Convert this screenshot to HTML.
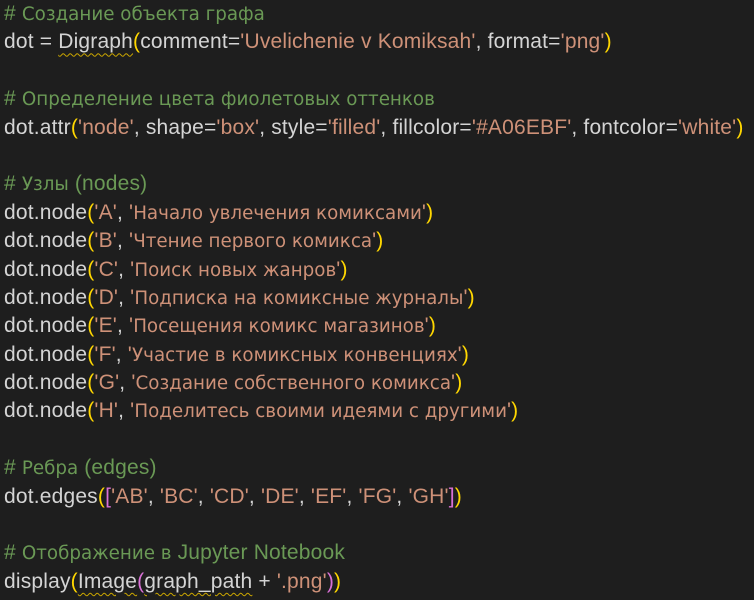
<!DOCTYPE html>
<html><head><meta charset="utf-8"><style>
body{margin:0;background:#1e1e1e;width:754px;height:600px;overflow:hidden}
.code{position:absolute;top:0;left:4px;font-family:"Liberation Sans",sans-serif;font-size:21px;letter-spacing:0.18px;color:#d4d4d4}
.code div{height:28.4px;line-height:28.4px;white-space:pre;overflow:visible}
.c{color:#6a9955}.s{color:#ce9178}.y{color:#ffd700}.p{color:#da70d6}
.r{font-family:"DejaVu Sans",sans-serif;font-size:18.3px;line-height:0;letter-spacing:0}
.w{text-decoration:underline wavy #cca700;text-decoration-thickness:1px;text-underline-offset:4px}
</style></head><body><div class="code">
<div><span class="c"># <span class="r">Создание объекта графа</span></span></div>
<div>dot = <span class="w">Digraph</span><span class="y">(</span>comment=<span class="s">'Uvelichenie v Komiksah'</span>, format=<span class="s">'png'</span><span class="y">)</span></div>
<div> </div>
<div><span class="c"># <span class="r">Определение цвета фиолетовых оттенков</span></span></div>
<div>dot.attr<span class="y">(</span><span class="s">'node'</span>, shape=<span class="s">'box'</span>, style=<span class="s">'filled'</span>, fillcolor=<span class="s">'#A06EBF'</span>, fontcolor=<span class="s">'white'</span><span class="y">)</span></div>
<div> </div>
<div><span class="c"># <span class="r">Узлы</span> (nodes)</span></div>
<div>dot.node<span class="y">(</span><span class="s">'A'</span>, <span class="s">'<span class="r">Начало увлечения комиксами</span>'</span><span class="y">)</span></div>
<div>dot.node<span class="y">(</span><span class="s">'B'</span>, <span class="s">'<span class="r">Чтение первого комикса</span>'</span><span class="y">)</span></div>
<div>dot.node<span class="y">(</span><span class="s">'C'</span>, <span class="s">'<span class="r">Поиск новых жанров</span>'</span><span class="y">)</span></div>
<div>dot.node<span class="y">(</span><span class="s">'D'</span>, <span class="s">'<span class="r">Подписка на комиксные журналы</span>'</span><span class="y">)</span></div>
<div>dot.node<span class="y">(</span><span class="s">'E'</span>, <span class="s">'<span class="r">Посещения комикс магазинов</span>'</span><span class="y">)</span></div>
<div>dot.node<span class="y">(</span><span class="s">'F'</span>, <span class="s">'<span class="r">Участие в комиксных конвенциях</span>'</span><span class="y">)</span></div>
<div>dot.node<span class="y">(</span><span class="s">'G'</span>, <span class="s">'<span class="r">Создание собственного комикса</span>'</span><span class="y">)</span></div>
<div>dot.node<span class="y">(</span><span class="s">'H'</span>, <span class="s">'<span class="r">Поделитесь своими идеями с другими</span>'</span><span class="y">)</span></div>
<div> </div>
<div><span class="c"># <span class="r">Ребра</span> (edges)</span></div>
<div>dot.edges<span class="y">(</span><span class="p">[</span><span class="s">'AB'</span>, <span class="s">'BC'</span>, <span class="s">'CD'</span>, <span class="s">'DE'</span>, <span class="s">'EF'</span>, <span class="s">'FG'</span>, <span class="s">'GH'</span><span class="p">]</span><span class="y">)</span></div>
<div> </div>
<div><span class="c"># <span class="r">Отображение в</span> Jupyter Notebook</span></div>
<div>display<span class="y">(</span><span class="w">Image</span><span class="p">(</span><span class="w">graph_path</span> + <span class="s">'.png'</span><span class="p">)</span><span class="y">)</span></div>
</div></body></html>
